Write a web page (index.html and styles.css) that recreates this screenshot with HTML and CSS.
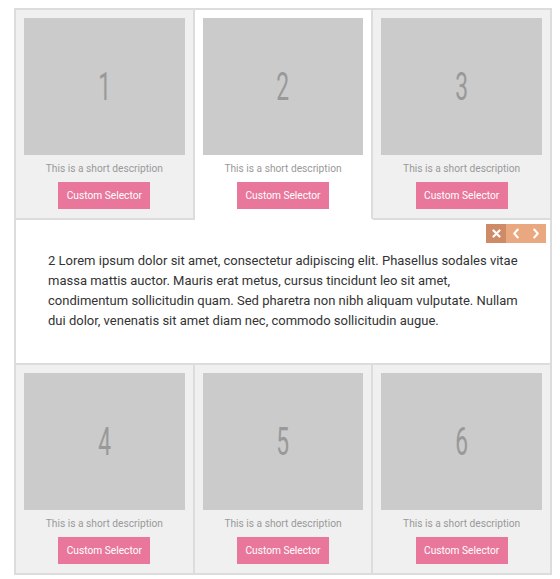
FILE: index.html
```html
<!DOCTYPE html>
<html lang="en">
<head>
    <meta charset="UTF-8">
    <title>Expanding Grid</title>
    <link rel="stylesheet" href="styles.css">
</head>
<body>
    <div class="grid">
        <div class="item">
            <div class="thumb"><span>1</span></div>
            <p class="desc">This is a short description</p>
            <a class="btn" href="#">Custom Selector</a>
        </div>
        <div class="item active">
            <div class="thumb"><span>2</span></div>
            <p class="desc">This is a short description</p>
            <a class="btn" href="#">Custom Selector</a>
        </div>
        <div class="item">
            <div class="thumb"><span>3</span></div>
            <p class="desc">This is a short description</p>
            <a class="btn" href="#">Custom Selector</a>
        </div>

        <div class="expander">
            <div class="controls">
                <span class="ctl close">
                    <svg width="9" height="9" viewBox="0 0 9 9"><path d="M1.5 1.5l6 6M7.5 1.5l-6 6" stroke="#fff" stroke-width="2.2" stroke-linecap="round"/></svg>
                </span>
                <span class="ctl">
                    <svg width="8" height="11" viewBox="0 0 8 11"><path d="M5.8 1.5L2.2 5.5l3.6 4" fill="none" stroke="#fff" stroke-width="2" stroke-linecap="round" stroke-linejoin="round"/></svg>
                </span>
                <span class="ctl">
                    <svg width="8" height="11" viewBox="0 0 8 11"><path d="M2.2 1.5l3.6 4-3.6 4" fill="none" stroke="#fff" stroke-width="2" stroke-linecap="round" stroke-linejoin="round"/></svg>
                </span>
            </div>
            <p class="text">2 Lorem ipsum dolor sit amet, consectetur adipiscing elit. Phasellus sodales vitae massa mattis auctor. Mauris erat metus, cursus tincidunt leo sit amet, condimentum sollicitudin quam. Sed pharetra non nibh aliquam vulputate. Nullam dui dolor, venenatis sit amet diam nec, commodo sollicitudin augue.</p>
        </div>

        <div class="item">
            <div class="thumb"><span>4</span></div>
            <p class="desc">This is a short description</p>
            <a class="btn" href="#">Custom Selector</a>
        </div>
        <div class="item">
            <div class="thumb"><span>5</span></div>
            <p class="desc">This is a short description</p>
            <a class="btn" href="#">Custom Selector</a>
        </div>
        <div class="item">
            <div class="thumb"><span>6</span></div>
            <p class="desc">This is a short description</p>
            <a class="btn" href="#">Custom Selector</a>
        </div>
    </div>
</body>
</html>
```

FILE: styles.css
```css
* {
    box-sizing: border-box;
}

body {
    margin: 8px;
    background-color: #fff;
    font-family: Roboto, "Liberation Sans", sans-serif;
}

.grid {
    display: grid;
    grid-template-columns: repeat(3, 1fr);
    width: 538px;
    margin-left: 6px;
    border-left: 2px solid #dcdcdc;
    border-top: 2px solid #dcdcdc;
}

.item {
    background-color: #f0f0f0;
    border-right: 2px solid #dcdcdc;
    border-bottom: 2px solid #dcdcdc;
    padding: 8px 8px 9px;
    text-align: center;
}

.item.active {
    background-color: #fff;
    border-bottom-color: #fff;
}

.thumb {
    display: flex;
    align-items: center;
    justify-content: center;
    height: 137px;
    background-color: #cbcbcb;
}

/* condensed numerals, no narrow face installed */
.thumb span {
    display: inline-block;
    color: #999;
    font-family: "Roboto", sans-serif;
    font-weight: 400;
    font-size: 38px;
    transform: scaleX(0.6);
}

.desc {
    margin: 6px 0 5px;
    font-size: 10.2px;
    line-height: 16px;
    color: #999;
}

.btn {
    display: inline-block;
    width: 92px;
    height: 27px;
    line-height: 27px;
    background-color: #e8779b;
    color: #fff;
    font-size: 10.2px;
    text-align: center;
    text-decoration: none;
}

.expander {
    grid-column: 1 / -1;
    background-color: #fff;
    border-right: 2px solid #dcdcdc;
    border-bottom: 2px solid #dcdcdc;
    padding: 4px 4px 32px 32px;
}

.controls {
    display: flex;
    justify-content: flex-end;
}

.ctl {
    display: flex;
    align-items: center;
    justify-content: center;
    width: 20px;
    height: 19px;
    background-color: #e9a87f;
}

.ctl.close {
    background-color: #cf8a67;
}

.text {
    margin: 8px 28px 0 0;
    font-size: 13px;
    line-height: 20px;
    color: #333;
}
```
